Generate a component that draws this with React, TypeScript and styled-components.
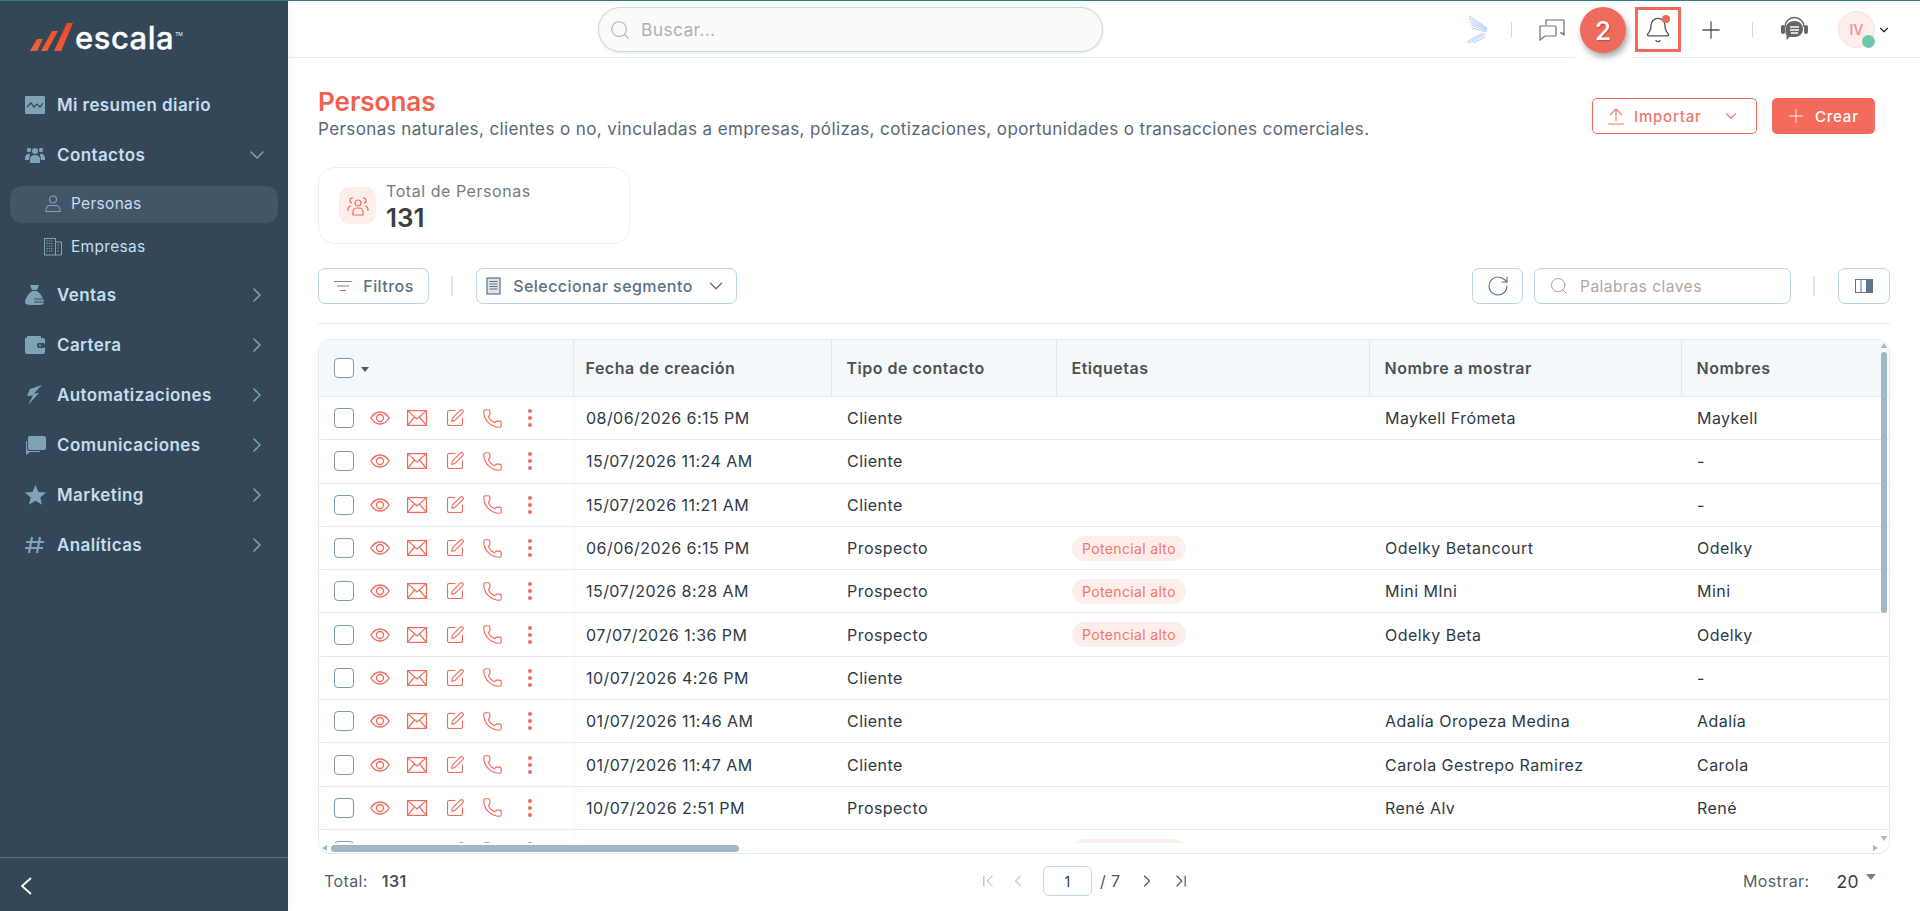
import React from "react";
import styled, { createGlobalStyle } from "styled-components";
import {
  ChevronDown,
  ChevronRight,
  ChevronLeft,
  ChevronFirst,
  ChevronLast,
  Search,
  RotateCw,
  Plus,
  SquarePen,
  Phone,
  Bell,
} from "lucide-react";

const FONT = `Inter, "Liberation Sans", sans-serif`;

const Global = createGlobalStyle`
  html, body { margin: 0; padding: 0; background: #fff; }
  body { font-family: ${FONT}; }
  * { box-sizing: border-box; }
`;

const Page = styled.div`
  width: 1920px;
  height: 911px;
  display: grid;
  grid-template-columns: 288px 1fr;
  border-top: 1px solid #2f7f80;
  overflow: hidden;
  position: relative;
`;

/* sidebar */
const Sidebar = styled.aside`
  background: #344759;
  display: flex;
  flex-direction: column;
  height: 910px;
  box-shadow: 3px 0 10px rgba(0, 0, 0, 0.03);
`;
const LogoRow = styled.div`
  height: 79px;
  padding: 21px 0 0 30px;
  display: flex;
  align-items: flex-start;
`;
const LogoText = styled.span`
  font-size: 31px;
  line-height: 32px;
  font-weight: 500;
  color: #fff;
  margin-left: 2px;
  letter-spacing: 0.5px;
  -webkit-text-stroke: 0.3px #fff;
`;
const Tm = styled.sup`
  font-size: 5px;
  line-height: 10px;
  color: #fff;
  vertical-align: top;
  margin: 7px 0 0 1px;
`;
const Nav = styled.nav`
  flex: 1;
  display: flex;
  flex-direction: column;
`;
const NavItem = styled.div`
  height: 50px;
  flex: none;
  display: flex;
  align-items: center;
  padding: 0 19px 0 25px;
  font-size: 17px;
  font-weight: 600;
  color: #c5deee;
  letter-spacing: 0.4px;
  svg.chev { margin-left: auto; color: #7ea3b3; }
`;
const NavIcon = styled.span`
  width: 32px;
  display: flex;
  color: #7ea3b3;
`;
const SubList = styled.div`
  display: flex;
  flex-direction: column;
  gap: 6px;
  padding: 6px 10px 4px;
`;
const SubItem = styled.div<{ $active?: boolean }>`
  height: 37px;
  padding: 0 0 2px 33px;
  display: flex;
  align-items: center;
  gap: 8px;
  border-radius: 12px;
  font-size: 15.5px;
  color: #c5deee;
  letter-spacing: 0.3px;
  background: ${(p) => (p.$active ? "#435667" : "transparent")};
  svg { flex: none; }
`;
const SidebarFoot = styled.div`
  height: 54px;
  border-top: 1px solid #5a7080;
  padding: 19px 0 0 20px;
  display: flex;
  align-items: flex-start;
`;

/* header */
const Main = styled.main`
  display: flex;
  flex-direction: column;
  min-width: 0;
  height: 910px;
`;
const Header = styled.header`
  height: 57px;
  flex: none;
  border-bottom: 1px solid #e3ecee;
  display: flex;
  align-items: center;
  padding: 1px 29px 0 310px;
  position: relative;
`;
const GlobalSearch = styled.div`
  width: 505px;
  height: 45px;
  border-radius: 23px;
  border: 1px solid #c5d7e3;
  background: #fafafa;
  box-shadow: 0 1px 3px rgba(90, 120, 140, 0.18);
  display: flex;
  align-items: center;
  gap: 10px;
  padding-left: 10px;
  font-size: 17.5px;
  letter-spacing: 0.3px;
  color: #b0b0b0;
  svg { color: #b5b5b5; }
`;
const HeaderRight = styled.div`
  margin-left: auto;
  display: flex;
  align-items: center;
`;
const HeadSlot = styled.span<{ $ml: number }>`
  display: flex;
  margin-left: ${(p) => p.$ml}px;
`;
const HeadSep = styled.span<{ $ml: number }>`
  width: 1px;
  height: 15px;
  margin-left: ${(p) => p.$ml}px;
  background: #cfd8de;
`;
const Highlight = styled.div`
  width: 46px;
  height: 45px;
  margin-left: 70px;
  border: 3px solid #ee6a5c;
  display: flex;
  align-items: center;
  justify-content: center;
  position: relative;
  color: #555;
`;
const BellDot = styled.span`
  position: absolute;
  top: 5px;
  right: 8px;
  width: 8px;
  height: 8px;
  border-radius: 50%;
  background: #f1695b;
`;
const StepBadge = styled.div`
  position: absolute;
  left: 1287px;
  top: 0;
  width: 56px;
  height: 58px;
  background: #fff;
  display: flex;
  align-items: flex-start;
  justify-content: center;
  padding-top: 6px;
  &::after {
    content: "2";
    width: 46px;
    height: 46px;
    border-radius: 50%;
    background: #ee6a5c;
    color: #fff;
    font-size: 26px;
    font-weight: 500;
    text-shadow: 1px 1px 1px rgba(0, 0, 0, 0.25);
    display: flex;
    align-items: center;
    justify-content: center;
    box-shadow: 2px 4px 6px rgba(0, 0, 0, 0.35);
  }
`;
const Avatar = styled.div`
  width: 37px;
  height: 37px;
  margin-left: 29px;
  border-radius: 50%;
  background: #fdeeec;
  border: 1px solid #fbe0dc;
  color: #f29a8e;
  font-size: 14px;
  font-weight: 600;
  display: flex;
  align-items: center;
  justify-content: center;
  position: relative;
`;
const AvatarDot = styled.span`
  position: absolute;
  right: -1px;
  bottom: -1px;
  width: 13px;
  height: 13px;
  border-radius: 50%;
  background: #6ec6ae;
`;

/* content */
const Content = styled.div`
  flex: 1;
  padding: 0 30px;
  display: flex;
  flex-direction: column;
  min-height: 0;
`;
const TitleRow = styled.div`
  height: 109px;
  flex: none;
  display: flex;
  justify-content: space-between;
  align-items: flex-start;
  padding-top: 30px;
`;
const Title = styled.h1`
  margin: 0;
  font-size: 26px;
  line-height: 28px;
  font-weight: 600;
  color: #f1604f;
`;
const Subtitle = styled.p`
  margin: 2px 0 0;
  font-size: 17px;
  line-height: 22px;
  color: #566878;
  letter-spacing: 0.4px;
`;
const Actions = styled.div`
  display: flex;
  gap: 15px;
  margin: 10px 15px 0 0;
`;
const OutlineButton = styled.button`
  width: 165px;
  height: 36px;
  border: 1px solid #f1695b;
  border-radius: 5px;
  background: #fff;
  color: #f1786b;
  font: 500 15px ${FONT};
  letter-spacing: 0.8px;
  display: flex;
  align-items: center;
  gap: 8px;
  padding: 0 16px 0 13px;
  svg:last-child { margin-left: auto; }
`;
const SolidButton = styled.button`
  width: 103px;
  height: 36px;
  border: 0;
  border-radius: 5px;
  background: #f46a5b;
  color: #fff;
  font: 500 15px ${FONT};
  letter-spacing: 0.8px;
  display: flex;
  align-items: center;
  gap: 8px;
  padding: 0 14px 0 13px;
`;
const StatCard = styled.div`
  width: 312px;
  height: 77px;
  flex: none;
  border: 1px solid #eef0f0;
  border-radius: 17px;
  display: flex;
  align-items: center;
  gap: 10px;
  padding-left: 20px;
`;
const StatIcon = styled.div`
  width: 37px;
  height: 37px;
  border-radius: 10px;
  background: #fdeeec;
  display: flex;
  align-items: center;
  justify-content: center;
`;
const StatBody = styled.div`
  padding-top: 4px;
`;
const StatLabel = styled.div`
  font-size: 16px;
  line-height: 20px;
  color: #7a7a7a;
  letter-spacing: 0.55px;
`;
const StatValue = styled.div`
  font-size: 26px;
  line-height: 32px;
  margin-top: 1px;
  font-weight: 600;
  color: #3d3d3d;
`;
const Toolbar = styled.div`
  height: 56px;
  flex: none;
  margin-top: 24px;
  border-bottom: 1px solid #e3ecee;
  display: flex;
  align-items: flex-start;
`;
const ToolButton = styled.div<{ $w: number; $gap?: number }>`
  width: ${(p) => p.$w}px;
  height: 36px;
  border: 1px solid #bfd3e1;
  border-radius: 7px;
  background: #fff;
  color: #5b7083;
  display: flex;
  align-items: center;
  justify-content: center;
  gap: ${(p) => p.$gap ?? 10}px;
  font-size: 16px;
  font-weight: 500;
  letter-spacing: 0.45px;
`;
const ToolSep = styled.span`
  width: 2px;
  height: 20px;
  margin: 8px 23px 0 22px;
  background: #e4e4e0;
`;
const Spacer = styled.div`
  flex: 1;
`;
const KeywordSearch = styled.div`
  width: 257px;
  height: 36px;
  margin-left: 11px;
  border: 1px solid #bfd3e1;
  border-radius: 7px;
  display: flex;
  align-items: center;
  gap: 11px;
  padding-left: 14px;
  font-size: 15.5px;
  letter-spacing: 0.5px;
  color: #a9a9a9;
  svg { color: #999; }
`;
const TableFrame = styled.div`
  margin-top: 15px;
  height: 515px;
  flex: none;
  border: 1px solid #e3ecee;
  border-radius: 12px;
  overflow: hidden;
  position: relative;
`;
const TableClip = styled.div`
  height: 503px;
  overflow: hidden;
`;
const Table = styled.table`
  width: 1572px;
  border-collapse: collapse;
  table-layout: fixed;
`;
const Col = styled.col<{ $w: number }>`
  width: ${(p) => p.$w}px;
`;
const Th = styled.th`
  height: 56.5px;
  background: #f4f8fb;
  border-bottom: 1px solid #e3ecee;
  border-left: 1px solid #dfe7ec;
  padding: 0 0 0 15px;
  text-align: left;
  font-size: 16px;
  font-weight: 600;
  letter-spacing: 0.5px;
  color: #505050;
  &:first-child { border-left: 0; }
  &:nth-child(2) { padding-left: 12px; }
`;
const Td = styled.td`
  height: 43.3px;
  border-bottom: 1px solid #e6ecee;
  padding: 0 0 0 16px;
  font-size: 16px;
  letter-spacing: 0.45px;
  color: #2e3a46;
  white-space: nowrap;
  &:first-child {
    padding-left: 15px;
    box-shadow: 3px 0 4px rgba(0, 0, 0, 0.02);
  }
  &:nth-child(2) { padding-left: 13px; }
`;
const RowTools = styled.div`
  display: flex;
  align-items: center;
  color: #f0695a;
`;
const Check = styled.span`
  width: 20px;
  height: 20px;
  border: 1px solid #7b9bb0;
  border-radius: 4px;
  background: #fff;
  flex: none;
`;
const RowIcon = styled.span<{ $ml: number }>`
  display: flex;
  margin-left: ${(p) => p.$ml}px;
`;
const Caret = styled.span`
  width: 0;
  height: 0;
  margin: 2px 0 0 7px;
  border: 4px solid transparent;
  border-top: 5px solid #555;
  border-bottom: 0;
`;
const Tag = styled.span`
  display: inline-block;
  height: 25px;
  line-height: 25px;
  padding: 0 10px;
  border-radius: 13px;
  background: #fdeeec;
  color: #f1786b;
  font-size: 14px;
  letter-spacing: 0.35px;
`;
const VThumb = styled.div`
  position: absolute;
  right: 2px;
  top: 12px;
  width: 6px;
  height: 261px;
  border-radius: 3px;
  background: #a0b8c5;
`;
const HThumb = styled.div`
  position: absolute;
  left: 12px;
  bottom: 1px;
  width: 408px;
  height: 7px;
  border-radius: 4px;
  background: #a0b8c5;
`;
const ScrollArrow = styled.span<{ $dir: "up" | "down" | "left" | "right" }>`
  position: absolute;
  width: 0;
  height: 0;
  border: 3.5px solid transparent;
  ${(p) =>
    p.$dir === "up"
      ? "right: 2px; top: 3px; border-top: 0; border-bottom: 5px solid #a0b8c5;"
      : p.$dir === "down"
        ? "right: 2px; bottom: 12px; border-bottom: 0; border-top: 5px solid #a0b8c5;"
        : p.$dir === "left"
          ? "left: 3px; bottom: 2px; border-left: 0; border-right: 5px solid #a0b8c5;"
          : "right: 11px; bottom: 2px; border-right: 0; border-left: 5px solid #a0b8c5;"}
`;
const Footer = styled.div`
  flex: 1;
  display: grid;
  grid-template-columns: 654px auto 1fr;
  align-items: center;
  padding: 0 0 3px 6px;
  font-size: 16px;
  letter-spacing: 0.4px;
  color: #555f68;
`;
const FootTotal = styled.div`
  display: flex;
  gap: 14px;
  b { font-weight: 600; color: #505050; }
`;
const Pager = styled.div`
  display: flex;
  align-items: center;
  color: #555;
`;
const PagerIcon = styled.span<{ $ml?: number; $off?: boolean }>`
  display: flex;
  margin-left: ${(p) => p.$ml ?? 0}px;
  color: ${(p) => (p.$off ? "#aaa" : "#555")};
`;
const PageInput = styled.div`
  width: 49px;
  height: 30px;
  border: 1px solid #c5d7e3;
  border-radius: 6px;
  margin: 0 8px 0 15px;
  display: flex;
  align-items: center;
  justify-content: center;
  font-size: 14px;
  color: #2e3a5a;
`;
const FootShow = styled.div`
  display: flex;
  align-items: center;
  justify-content: flex-end;
  gap: 27px;
  padding-right: 14px;
`;
const PerPage = styled.span`
  color: #2e3a46;
  font-size: 17.5px;
  position: relative;
  padding-right: 17px;
  &::after {
    content: "";
    position: absolute;
    right: 0;
    top: 3px;
    border: 5px solid transparent;
    border-top: 6px solid #6d8594;
    border-bottom: 0;
  }
`;

const rows = [
  ["08/06/2026 6:15 PM", "Cliente", false, "Maykell Frómeta", "Maykell"],
  ["15/07/2026 11:24 AM", "Cliente", false, "", "-"],
  ["15/07/2026 11:21 AM", "Cliente", false, "", "-"],
  ["06/06/2026 6:15 PM", "Prospecto", true, "Odelky Betancourt", "Odelky"],
  ["15/07/2026 8:28 AM", "Prospecto", true, "Mini MIni", "Mini"],
  ["07/07/2026 1:36 PM", "Prospecto", true, "Odelky Beta", "Odelky"],
  ["10/07/2026 4:26 PM", "Cliente", false, "", "-"],
  ["01/07/2026 11:46 AM", "Cliente", false, "Adalía Oropeza Medina", "Adalía"],
  ["01/07/2026 11:47 AM", "Cliente", false, "Carola Gestrepo Ramirez", "Carola"],
  ["10/07/2026 2:51 PM", "Prospecto", false, "René Alv", "René"],
  ["10/07/2026 2:40 PM", "Prospecto", true, "", ""],
] as const;

const widths = [254, 258, 225, 313, 312, 210];

function LogoMark() {
  return (
    <svg width="43" height="30" viewBox="0 0 43 30">
      <defs>
        <linearGradient id="lg" x1="0" y1="1" x2="1" y2="0">
          <stop offset="0" stopColor="#f2643a" />
          <stop offset="1" stopColor="#ef4526" />
        </linearGradient>
      </defs>
      <path
        d="M0 29 L7 17 h6 L7 29 Z M11 29 L22 9 h6 L17 29 Z M24 29 L37 1 h6 L31 29 Z"
        fill="url(#lg)"
      />
    </svg>
  );
}

function Wing() {
  return (
    <svg width="22" height="28" viewBox="0 0 22 28" fill="none" stroke="#bcd3f7" strokeWidth="1.2">
      <path d="M3 0 L21 12" />
      <path d="M3 3 L21 13" />
      <path d="M4 6 L21 14" />
      <path d="M5 9 L21 15" />
      <path d="M6 12 L20 16" />
      <path d="M17 17 L1 26" />
      <path d="M19 18 L3 27" />
      <path d="M19 21 L7 27" />
    </svg>
  );
}

function ChatBubbles() {
  return (
    <svg width="26" height="22" viewBox="0 0 26 22" fill="none" stroke="#707070" strokeWidth="1.2">
      <path d="M7 6 V1 h18 v13 h-4" />
      <path d="M25 14 v2 l-3 -2" />
      <path d="M1 7 h15 a1 1 0 0 1 1 1 v8 a1 1 0 0 1 -1 1 H6 l-5 4 Z" />
    </svg>
  );
}

function Support() {
  return (
    <svg width="29" height="28" viewBox="0 0 29 28" fill="none">
      <path d="M5 11 a9.500 9.500 0 0 1 19 0" stroke="#666" strokeWidth="1.500" />
      <rect x="1" y="9" width="4" height="9" rx="2" fill="#666" />
      <rect x="24" y="9" width="4" height="9" rx="2" fill="#666" />
      <path
        d="M14.500 5 c5 0 8.500 3.500 8.500 8 s-3.500 8 -8.500 8 h-5 l-3 3 v-5 c-1.500-1.500-1-4 -1-6 c0-4.500 4-8 9-8Z"
        fill="#666"
      />
      <path d="M10 11 h9 M10 14 h9 M11 17 h7" stroke="#fff" strokeWidth="1.300" />
    </svg>
  );
}

function UploadIcon() {
  return (
    <svg width="20" height="20" viewBox="0 0 20 20" fill="none" stroke="currentColor" strokeWidth="1.1">
      <path d="M10 3 V15 M4 9 L10 3 L16 9 M2 18 H18" />
    </svg>
  );
}

function GroupIcon() {
  return (
    <svg width="22" height="22" viewBox="0 0 22 22" fill="none" stroke="#f1695b" strokeWidth="1.2">
      <circle cx="11" cy="8" r="3" />
      <path d="M6 20 v-3 a4 4 0 0 1 4 -4 h2 a4 4 0 0 1 4 4 v3 Z" />
      <path d="M6 3 a2.500 2.500 0 0 0 -1 5 M16 3 a2.500 2.500 0 0 1 1 5" />
      <path d="M1 16 v-2 a3.500 3.500 0 0 1 3 -3 M21 16 v-2 a3.500 3.500 0 0 0 -3 -3" />
    </svg>
  );
}

function EyeIcon() {
  return (
    <svg width="20" height="20" viewBox="0 0 20 20" fill="none" stroke="currentColor" strokeWidth="1.3">
      <path d="M0.800 10 C4 5 7 4 10 4 s6 1 9.200 6 C16 15 13 16 10 16 s-6 -1 -9.200 -6Z" />
      <circle cx="10" cy="10" r="3.500" />
    </svg>
  );
}

function MailIcon() {
  return (
    <svg width="20" height="20" viewBox="0 0 20 20" fill="none" stroke="currentColor" strokeWidth="1.2">
      <rect x="0.600" y="2.600" width="18.800" height="14.800" />
      <path d="M0.600 2.600 L10 11 L19.400 2.600 M0.600 17.400 L7.500 9 M19.400 17.400 L12.500 9" />
    </svg>
  );
}

function PersonIcon() {
  return (
    <svg width="20" height="18" viewBox="-2 0 20 18" fill="none" stroke="#7ea3b3" strokeWidth="1.1">
      <circle cx="8" cy="4.500" r="3.500" />
      <path d="M1 16.500 v-2 a4 4 0 0 1 4 -4 h6 a4 4 0 0 1 4 4 v2 Z" />
    </svg>
  );
}

function BuildingIcon() {
  return (
    <svg width="20" height="18" viewBox="-1 0 20 18" fill="none" stroke="#7ea3b3" strokeWidth="1">
      <rect x="0.500" y="0.500" width="11" height="16.500" />
      <path d="M11.500 4 h6 v13 h-6" />
      <path d="M2.500 3 h7 M2.500 5.500 h7 M2.500 8 h7 M2.500 10.500 h7 M2.500 13 h7 M13.500 7 h2 M13.500 10 h2 M13.500 13 h2" strokeDasharray="1.300 1" />
    </svg>
  );
}

function NavGlyph({ name }: { name: string }) {
  const c = "#7ea3b3";
  switch (name) {
    case "chart":
      return (
        <svg width="20" height="18" viewBox="0 0 20 18">
          <rect width="20" height="18" rx="1" fill={c} />
          <path d="M2 11 l4-4 3 4 3-3 3 3 3-4" stroke="#344759" strokeWidth="1.200" fill="none" />
        </svg>
      );
    case "users":
      return (
        <svg width="20" height="18" viewBox="0 0 20 18" fill={c}>
          <circle cx="10" cy="5" r="3" />
          <circle cx="4" cy="4" r="2.200" />
          <circle cx="16" cy="4" r="2.200" />
          <path d="M5 17 v-4 a5 4 0 0 1 10 0 v4Z" />
          <path d="M0 12 a4 4 0 0 1 5-4 l-1 6 H0Z M20 12 a4 4 0 0 0 -5-4 l1 6 h4Z" />
        </svg>
      );
    case "bag":
      return (
        <svg width="20" height="21" viewBox="0 0 20 21" fill={c}>
          <path d="M5 0 h9 l-2 5 h-5Z" />
          <path d="M7 6 h5 c4 3 7 8 7 11 c0 3 -3 3 -9 3 c-6 0 -10 0 -10 -3 c0 -3 3 -8 7 -11Z" />
          <path d="M9 14 h11 M9 17 h11" stroke="#344759" strokeWidth="1" />
        </svg>
      );
    case "wallet":
      return (
        <svg width="20" height="18" viewBox="0 0 20 18" fill={c}>
          <path d="M2 0 h14 v2 H2 Z" />
          <path d="M0 2 a2 2 0 0 1 2 0 h16 a2 2 0 0 1 2 2 v12 a2 2 0 0 1 -2 2 H2 a2 2 0 0 1 -2 -2 Z" />
          <rect x="12" y="7" width="8" height="5" rx="2" fill="#344759" />
          <circle cx="15" cy="9.500" r="1" fill={c} />
        </svg>
      );
    case "bolt":
      return (
        <svg width="18" height="20" viewBox="0 0 18 20" fill={c}>
          <path d="M17 0 L5 4 L2 11 L8 10.500 L3 20 L14 8 L9 8.500 L13 4 Z" />
        </svg>
      );
    case "chat":
      return (
        <svg width="21" height="19" viewBox="0 0 21 19" fill={c}>
          <path d="M5 0 h14 a2 2 0 0 1 2 2 v10 a2 2 0 0 1 -2 2 H5 a2 2 0 0 1 -2 -2 V2 a2 2 0 0 1 2 -2Z" />
          <path d="M1 5 v14 l4-3 h10 v-1 H4 a3 3 0 0 1 -2 -2 V5Z" />
        </svg>
      );
    case "star":
      return (
        <svg width="21" height="20" viewBox="0 0 21 20" fill={c}>
          <path d="M10.500 0 l3 7 7.500 .6 -5.700 4.900 1.800 7.300 -6.600 -4 -6.600 4 1.800 -7.300 L0 7.600 l7.500 -.6Z" />
        </svg>
      );
    default:
      return (
        <svg width="20" height="18" viewBox="0 0 20 18" stroke={c} strokeWidth="2.200" fill="none">
          <path d="M7 1 L4 17 M15 1 L12 17 M1 6 h18 M0 12 h18" />
        </svg>
      );
  }
}

const navTop = [
  ["Ventas", "bag"],
  ["Cartera", "wallet"],
  ["Automatizaciones", "bolt"],
  ["Comunicaciones", "chat"],
  ["Marketing", "star"],
  ["Analíticas", "hash"],
];

export default function App() {
  return (
    <Page>
      <Global />
      <Sidebar>
        <LogoRow>
          <LogoMark />
          <LogoText>escala</LogoText>
          <Tm>TM</Tm>
        </LogoRow>
        <Nav>
          <NavItem>
            <NavIcon><NavGlyph name="chart" /></NavIcon>
            Mi resumen diario
          </NavItem>
          <NavItem>
            <NavIcon><NavGlyph name="users" /></NavIcon>
            Contactos
            <ChevronDown className="chev" size={24} strokeWidth={1.5} />
          </NavItem>
          <SubList>
            <SubItem $active>
              <PersonIcon />
              Personas
            </SubItem>
            <SubItem>
              <BuildingIcon />
              Empresas
            </SubItem>
          </SubList>
          {navTop.map(([label, icon]) => (
            <NavItem key={label}>
              <NavIcon><NavGlyph name={icon} /></NavIcon>
              {label}
              <ChevronRight className="chev" size={24} strokeWidth={1.5} />
            </NavItem>
          ))}
        </Nav>
        <SidebarFoot>
          <svg width="12" height="18" viewBox="0 0 12 18" fill="none" stroke="#fff" strokeWidth="1.800">
            <path d="M11 1 L2 9 L11 17" />
          </svg>
        </SidebarFoot>
      </Sidebar>
      <Main>
        <Header>
          <GlobalSearch>
            <Search size={22} strokeWidth={1.2} />
            Buscar...
          </GlobalSearch>
          <HeaderRight>
            <Wing />
            <HeadSep $ml={23} />
            <HeadSlot $ml={27}><ChatBubbles /></HeadSlot>
            <Highlight>
              <Bell size={28} strokeWidth={1.2} />
              <BellDot />
            </Highlight>
            <HeadSlot $ml={16}><Plus size={28} strokeWidth={1.1} color="#555" /></HeadSlot>
            <HeadSep $ml={27} />
            <HeadSlot $ml={27}><Support /></HeadSlot>
            <Avatar>
              IV
              <AvatarDot />
            </Avatar>
            <HeadSlot $ml={2}><ChevronDown size={14} strokeWidth={2} color="#222" /></HeadSlot>
          </HeaderRight>
          <StepBadge />
        </Header>
        <Content>
          <TitleRow>
            <div>
              <Title>Personas</Title>
              <Subtitle>
                Personas naturales, clientes o no, vinculadas a empresas, pólizas, cotizaciones, oportunidades o transacciones comerciales.
              </Subtitle>
            </div>
            <Actions>
              <OutlineButton>
                <UploadIcon />
                Importar
                <ChevronDown size={18} strokeWidth={1.5} />
              </OutlineButton>
              <SolidButton>
                <Plus size={22} strokeWidth={1} />
                Crear
              </SolidButton>
            </Actions>
          </TitleRow>
          <StatCard>
            <StatIcon><GroupIcon /></StatIcon>
            <StatBody>
              <StatLabel>Total de Personas</StatLabel>
              <StatValue>131</StatValue>
            </StatBody>
          </StatCard>
          <Toolbar>
            <ToolButton $w={111}>
              <svg width="20" height="12" viewBox="0 0 20 12" stroke="#7a8a98" strokeWidth="1.200">
                <path d="M1 1.500 h18 M4 6 h12 M7 10.500 h6" />
              </svg>
              Filtros
            </ToolButton>
            <ToolSep />
            <ToolButton $w={261} $gap={12}>
              <svg width="15" height="18" viewBox="0 0 15 18" fill="none" stroke="#5b7083" strokeWidth="1.200">
                <rect x="1" y="1" width="13" height="16" fill="#dfe6ea" />
                <path d="M3.500 4.500 h8 M3.500 7 h8 M3.500 9.500 h8 M3.500 12 h8" />
              </svg>
              Seleccionar segmento
              <ChevronDown size={22} strokeWidth={1.5} />
            </ToolButton>
            <Spacer />
            <ToolButton $w={51}><RotateCw size={24} strokeWidth={1.1} /></ToolButton>
            <KeywordSearch>
              <Search size={20} strokeWidth={1.1} />
              Palabras claves
            </KeywordSearch>
            <ToolSep />
            <ToolButton $w={52}>
              <svg width="18" height="14" viewBox="0 0 18 14">
                <rect x="0.500" y="0.500" width="17" height="13" fill="#fff" stroke="#5e7688" />
                <path d="M6 0 v14" stroke="#5e7688" />
                <rect x="11" width="7" height="14" fill="#5e7688" />
              </svg>
            </ToolButton>
          </Toolbar>
          <TableFrame>
            <TableClip>
              <Table>
                <colgroup>
                  {widths.map((w) => <Col key={w} $w={w} />)}
                </colgroup>
                <thead>
                  <tr>
                    <Th>
                      <RowTools>
                        <Check />
                        <Caret />
                      </RowTools>
                    </Th>
                    <Th>Fecha de creación</Th>
                    <Th>Tipo de contacto</Th>
                    <Th>Etiquetas</Th>
                    <Th>Nombre a mostrar</Th>
                    <Th>Nombres</Th>
                  </tr>
                </thead>
                <tbody>
                  {rows.map((r, i) => (
                    <tr key={i}>
                      <Td>
                        <RowTools>
                          <Check />
                          <RowIcon $ml={16}><EyeIcon /></RowIcon>
                          <RowIcon $ml={17}><MailIcon /></RowIcon>
                          <RowIcon $ml={18}><SquarePen size={20} strokeWidth={1.3} /></RowIcon>
                          <RowIcon $ml={17}><Phone size={21} strokeWidth={1.3} /></RowIcon>
                          <RowIcon $ml={17}>
                            <svg width="20" height="20" viewBox="0 0 20 20" fill="#f1695b">
                              <circle cx="10" cy="3" r="2" />
                              <circle cx="10" cy="10" r="2" />
                              <circle cx="10" cy="17" r="2" />
                            </svg>
                          </RowIcon>
                        </RowTools>
                      </Td>
                      <Td>{r[0]}</Td>
                      <Td>{r[1]}</Td>
                      <Td>{r[2] && <Tag>Potencial alto</Tag>}</Td>
                      <Td>{r[3]}</Td>
                      <Td>{r[4]}</Td>
                    </tr>
                  ))}
                </tbody>
              </Table>
            </TableClip>
            <ScrollArrow $dir="up" />
            <VThumb />
            <ScrollArrow $dir="down" />
            <ScrollArrow $dir="left" />
            <HThumb />
            <ScrollArrow $dir="right" />
          </TableFrame>
          <Footer>
            <FootTotal>
              <span>Total:</span>
              <b>131</b>
            </FootTotal>
            <Pager>
              <PagerIcon $off><ChevronFirst size={20} strokeWidth={1.2} /></PagerIcon>
              <PagerIcon $off $ml={10}><ChevronLeft size={20} strokeWidth={1.2} /></PagerIcon>
              <PageInput>1</PageInput>
              <span>/ 7</span>
              <PagerIcon $ml={16}><ChevronRight size={20} strokeWidth={1.4} /></PagerIcon>
              <PagerIcon $ml={14}><ChevronLast size={20} strokeWidth={1.4} /></PagerIcon>
            </Pager>
            <FootShow>
              <span>Mostrar:</span>
              <PerPage>20</PerPage>
            </FootShow>
          </Footer>
        </Content>
      </Main>
    </Page>
  );
}
